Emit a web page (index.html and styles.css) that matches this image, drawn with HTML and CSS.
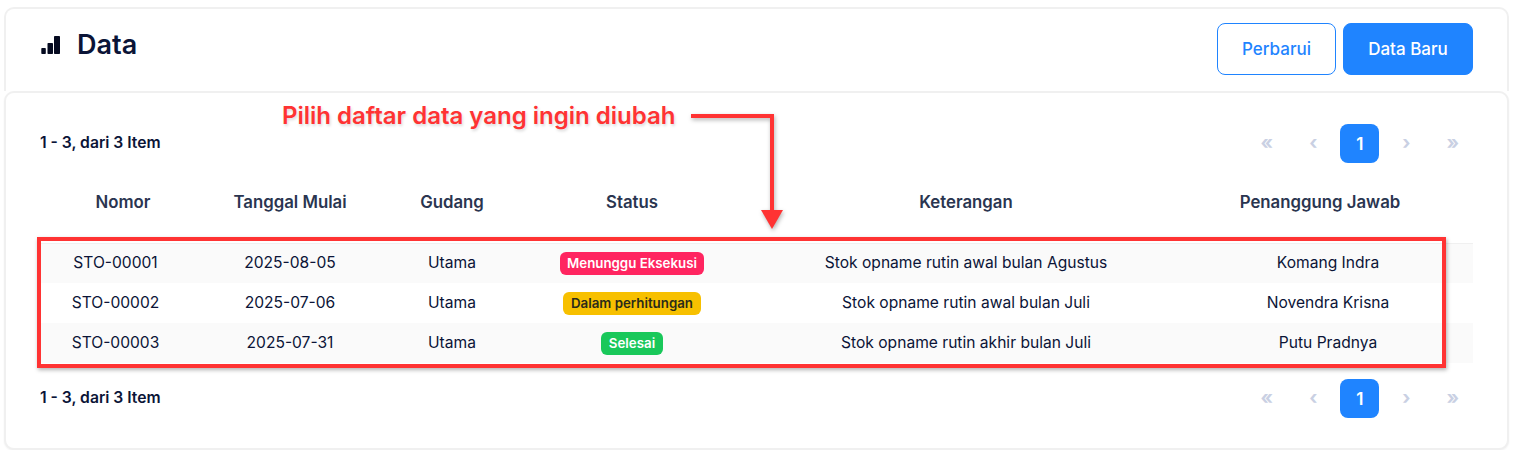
FILE: index.html
```html
<!DOCTYPE html>
<html lang="en">
<head>
    <meta charset="UTF-8">
    <meta name="viewport" content="width=device-width, initial-scale=1.0">
    <title>Data</title>
    <link rel="stylesheet" href="styles.css">
</head>
<body>
    <div class="page">
        <div class="card header-card">
            <div class="title">
                <svg class="title-icon" width="20" height="18" viewBox="0 0 20 18" fill="#050a20">
                    <rect x="0.3" y="12" width="4.5" height="6" rx="0.8"/>
                    <rect x="6.5" y="7" width="5.5" height="11" rx="0.8"/>
                    <rect x="13" y="0" width="6" height="18" rx="0.8"/>
                </svg>
                <h1>Data</h1>
            </div>
            <div class="actions">
                <button class="btn btn-outline">Perbarui</button>
                <button class="btn btn-primary">Data Baru</button>
            </div>
        </div>

        <div class="card body-card">
            <div class="pager-row top">
                <div class="count">1 - 3, dari 3 Item</div>
                <div class="pager">
                    <span>«</span><span>‹</span><span class="active">1</span><span>›</span><span>»</span>
                </div>
            </div>

            <table class="data-table">
                <colgroup>
                    <col class="c-nomor"><col class="c-tanggal"><col class="c-gudang"><col class="c-status"><col class="c-ket"><col class="c-pj"><col class="c-end">
                </colgroup>
                <thead>
                    <tr>
                        <th>Nomor</th>
                        <th>Tanggal Mulai</th>
                        <th>Gudang</th>
                        <th class="cell-status">Status</th>
                        <th>Keterangan</th>
                        <th>Penanggung Jawab</th>
                        <th></th>
                    </tr>
                </thead>
                <tbody>
                    <tr>
                        <td class="cell-nomor">STO-00001</td>
                        <td>2025-08-05</td>
                        <td>Utama</td>
                        <td class="cell-status"><span class="badge badge-red">Menunggu Eksekusi</span></td>
                        <td>Stok opname rutin awal bulan Agustus</td>
                        <td class="cell-pj">Komang Indra</td>
                        <td></td>
                    </tr>
                    <tr>
                        <td class="cell-nomor">STO-00002</td>
                        <td>2025-07-06</td>
                        <td>Utama</td>
                        <td class="cell-status"><span class="badge badge-yellow">Dalam perhitungan</span></td>
                        <td>Stok opname rutin awal bulan Juli</td>
                        <td class="cell-pj">Novendra Krisna</td>
                        <td></td>
                    </tr>
                    <tr>
                        <td class="cell-nomor">STO-00003</td>
                        <td>2025-07-31</td>
                        <td>Utama</td>
                        <td class="cell-status"><span class="badge badge-green">Selesai</span></td>
                        <td>Stok opname rutin akhir bulan Juli</td>
                        <td class="cell-pj">Putu Pradnya</td>
                        <td></td>
                    </tr>
                </tbody>
            </table>

            <div class="pager-row bottom">
                <div class="count">1 - 3, dari 3 Item</div>
                <div class="pager">
                    <span>«</span><span>‹</span><span class="active">1</span><span>›</span><span>»</span>
                </div>
            </div>
        </div>
    </div>

    <!-- annotation drawn over the screenshot -->
    <div class="note-text">Pilih daftar data yang ingin diubah</div>
    <svg class="note-arrow" width="100" height="125" viewBox="0 0 100 125">
        <path d="M1 6 H82 V102" fill="none" stroke="#ff3333" stroke-width="4"/>
        <path d="M71 100 H93 L82 119 Z" fill="#ff3333"/>
    </svg>
    <div class="note-box"></div>
</body>
</html>
```

FILE: styles.css
```css
* {
    box-sizing: border-box;
}
body {
    margin: 0;
    font-family: Inter, "Liberation Sans", sans-serif;
    background: #fff;
    color: #0b1437;
}
.page {
    padding: 7px 6px 0 4px;
}
.card {
    background: #fff;
    border: 2px solid #f0f0f0;
    border-radius: 10px;
}
.header-card {
    height: 84px;
    display: flex;
    justify-content: space-between;
    align-items: flex-start;
    padding: 14px 34px 0 35px;
    border-bottom: none;
    border-radius: 10px 10px 0 0;
}
.title {
    display: flex;
    align-items: center;
    gap: 16px;
    height: 42px;
}
.title-icon {
    margin-top: 2px;
}
.title h1 {
    margin: 0;
    font-size: 27px;
    font-weight: 600;
    line-height: 1;
}
.actions {
    display: flex;
    gap: 7px;
}
.btn {
    height: 52px;
    border-radius: 8px;
    font-family: inherit;
    font-size: 17px;
    font-weight: 500;
    cursor: pointer;
}
.btn-outline {
    width: 119px;
    background: #fff;
    border: 1px solid #1f84ff;
    color: #1f84ff;
}
.btn-primary {
    width: 130px;
    background: #1f84ff;
    border: 1px solid #1f84ff;
    color: #fff;
}
.body-card {
    height: 359px;
    padding: 31px 34px 0 34px;
    box-shadow: 0 1px 2px rgba(0, 0, 0, 0.06);
}
.pager-row {
    display: flex;
    justify-content: space-between;
    align-items: center;
    height: 39px;
}
.count {
    font-size: 15.7px;
    font-weight: 600;
    padding-bottom: 2px;
}
.pager {
    display: flex;
    align-items: center;
    gap: 7px;
    padding-right: 1px;
}
.pager span {
    width: 39.5px;
    height: 39px;
    display: flex;
    align-items: center;
    justify-content: center;
    padding: 0 0 3px 1px;
    border-radius: 8px;
    font-size: 19px;
    font-weight: 700;
    color: #c9d0e3;
}
.pager .active {
    padding: 0 0 0 1px;
    background: #1f84ff;
    font-size: 17px;
    font-weight: 600;
    color: #fff;
}
.data-table {
    width: 1433px;
    margin-top: 18px;
    margin-bottom: 16px;
    border-collapse: collapse;
    table-layout: fixed;
}
.c-nomor { width: 166px; }
.c-tanggal { width: 168px; }
.c-gudang { width: 156px; }
.c-status { width: 206px; }
.c-ket { width: 460px; }
.c-pj { width: 248px; }
.c-end { width: 29px; }
.data-table th {
    height: 62px;
    padding: 0 0 20px;
    font-size: 16.8px;
    font-weight: 600;
    color: #2a3550;
    text-align: center;
}
.data-table thead tr {
    border-bottom: 1px solid #f0f0f0;
}
.data-table td {
    height: 40px;
    padding: 0 0 1px;
    font-size: 15.6px;
    text-align: center;
}
.data-table th.cell-status,
.data-table td.cell-status {
    padding-right: 2px;
}
.data-table td.cell-status {
    padding-bottom: 0;
}
.data-table td.cell-nomor {
    padding-right: 15px;
}
.data-table td.cell-pj {
    padding-left: 16px;
}
.data-table tbody tr:nth-child(odd) {
    background: #fafafa;
}
.badge {
    display: inline-block;
    padding: 0 7.5px;
    height: 23px;
    line-height: 23px;
    border-radius: 6px;
    font-size: 13.3px;
    font-weight: 600;
    vertical-align: middle;
}
.badge-red {
    background: #ff2560;
    color: #fff;
}
.badge-yellow {
    background: #f7c000;
    color: #2b2b1a;
}
.badge-green {
    background: #19c85a;
    color: #fff;
}
.note-text {
    position: absolute;
    left: 282px;
    top: 101px;
    font-size: 24px;
    font-weight: 600;
    line-height: 29px;
    color: #ff3333;
    text-shadow: 1px 2px 3px rgba(0, 0, 0, 0.15);
    white-space: nowrap;
}
.note-arrow {
    position: absolute;
    left: 690px;
    top: 110px;
    filter: drop-shadow(1px 2px 2px rgba(0, 0, 0, 0.3));
}
.note-box {
    position: absolute;
    left: 37px;
    top: 237px;
    width: 1409px;
    height: 131px;
    border: 4px solid #ff3333;
    box-shadow: 1px 2px 4px rgba(0, 0, 0, 0.3);
}
```
